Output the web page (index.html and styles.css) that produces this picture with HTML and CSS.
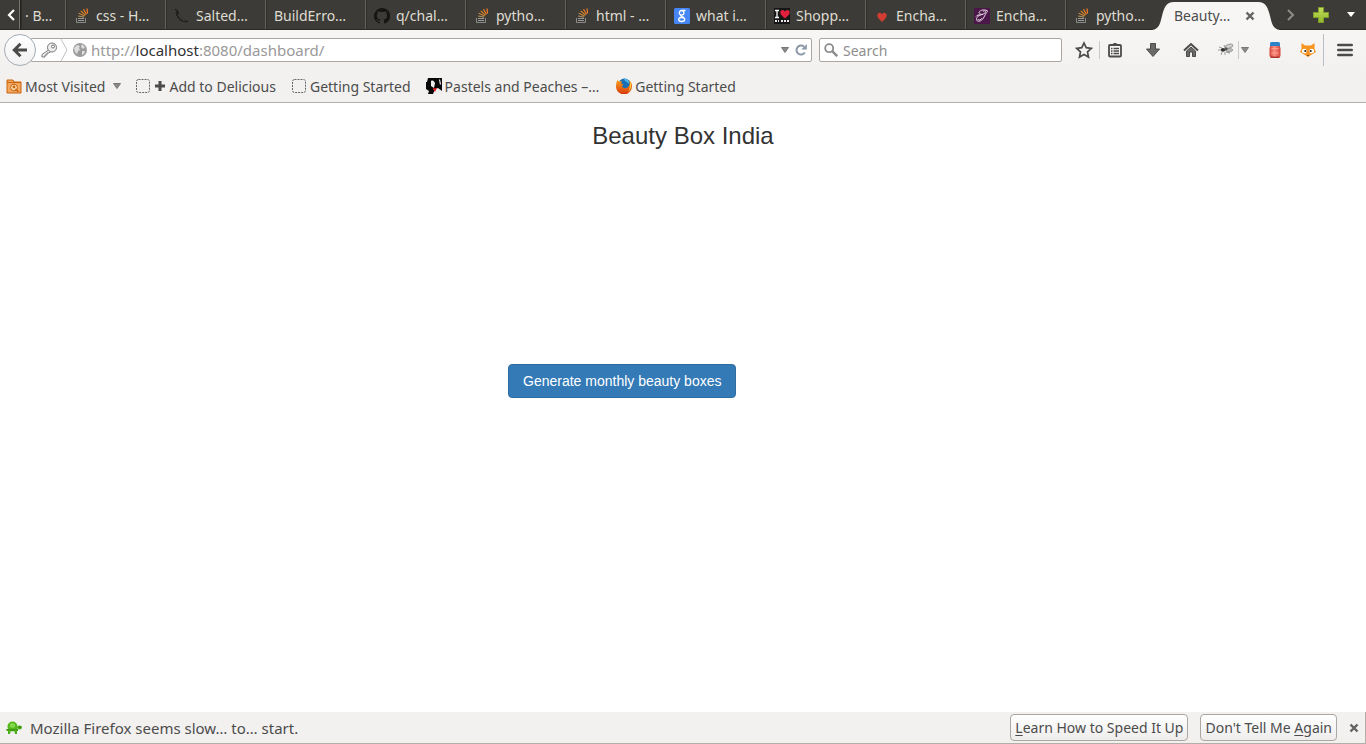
FILE: index.html
```html
<!DOCTYPE html>
<html lang="en">
<head>
<meta charset="utf-8">
<title>Beauty Box India</title>
<link rel="stylesheet" href="styles.css">
</head>
<body>
<svg class="defs" aria-hidden="true">
  <defs>
    <linearGradient id="plusFill" x1="0" y1="0" x2="0" y2="1"><stop offset="0" stop-color="#c3dd5a"/><stop offset="1" stop-color="#8fb82a"/></linearGradient>
    <linearGradient id="foxFill" x1="0" y1="0" x2="0" y2="1"><stop offset="0" stop-color="#f9a01b"/><stop offset="1" stop-color="#d9380c"/></linearGradient>
    <linearGradient id="jarFill" x1="0" y1="0" x2="1" y2="0"><stop offset="0" stop-color="#d2473a"/><stop offset=".45" stop-color="#fb8d7e"/><stop offset="1" stop-color="#d2473a"/></linearGradient>
    <symbol id="stack" viewBox="0 0 16 16">
      <path d="M2.500 10v4.500h9V10" fill="none" stroke="#8b8b89"/>
      <path d="M4 12.500h6M4 10.500h6" stroke="#9a9a98"/>
      <path d="M4 8l6.200 1.100" stroke="#a58a63" stroke-width="1.200"/>
      <path d="M4.700 5.300l6 2.700" stroke="#cf8a3c" stroke-width="1.200"/>
      <path d="M6.800 2.900l4.800 4.200" stroke="#e58a2b" stroke-width="1.200"/>
      <path d="M9.500 1.200l3.100 5M13 .500l.6 5" stroke="#f48024" stroke-width="1.200"/>
    </symbol>
    <symbol id="blank" viewBox="0 0 16 16"><rect x="1.500" y="1.500" width="13" height="13" rx="2" fill="none" stroke="#666" stroke-dasharray="2 1"/></symbol>
    <symbol id="down" viewBox="0 0 8 6"><path d="M.5.5h7L4 5.500z" fill="#8a8a88" stroke="#777"/></symbol>
    <symbol id="cross" viewBox="0 0 10 10"><path d="M1.500 1.500l7 7M8.500 1.500l-7 7" stroke="#62625f" stroke-width="2.400"/></symbol>
  </defs>
</svg>

<header class="chrome">
  <div class="tabstrip">
    <button class="scroll" aria-label="Scroll tabs left"><svg width="8" height="12" viewBox="0 0 8 12"><path d="M7 1L2 6l5 5" fill="none" stroke="#fff" stroke-width="2.200"/></svg></button>
    <nav class="tabs" aria-label="Tabs">
      <a class="tab clipped" href="#">· B…</a>
      <a class="tab" href="#"><svg class="icon"><use href="#stack"/></svg>css - H…</a>
      <a class="tab" href="#"><svg class="icon" viewBox="0 0 16 16"><path d="M1 1.500l2.500 1L4 5" fill="none" stroke="#11110f"/><path d="M2 4.500C3 4 4 4 4.500 5c.5 4 3 6.500 9.500 8.500-6 1-10-1.500-12-9z" fill="#2c2b28" stroke="#11110f" stroke-dasharray="2 1"/><path d="M4.500 6c1 3.500 3 5.500 7 7" fill="none" stroke="#55534e" stroke-width=".7"/></svg>Salted…</a>
      <a class="tab" href="#">BuildErro…</a>
      <a class="tab" href="#"><svg class="icon" viewBox="0 0 16 16"><path d="M8 0a8 8 0 0 0-2.500 15.600c.4.100.5-.2.500-.4v-1.400c-2.200.5-2.700-1-2.700-1-.4-.9-.9-1.200-.9-1.200-.7-.5.100-.5.100-.5.800.1 1.200.8 1.200.8.700 1.300 1.900.9 2.300.7.100-.5.300-.9.500-1.100C4.700 11.300 2.900 10.600 2.900 7.500c0-.9.300-1.600.8-2.100-.1-.2-.4-1 .1-2.100 0 0 .7-.2 2.200.8a7.700 7.700 0 0 1 4 0c1.500-1 2.200-.8 2.200-.8.400 1.100.2 1.900.1 2.100.5.600.8 1.300.8 2.100 0 3.100-1.900 3.800-3.700 4 .3.200.6.700.6 1.500v2.200c0 .2.100.5.600.4A8 8 0 0 0 8 0z" fill="#161514"/></svg>q/chal…</a>
      <a class="tab" href="#"><svg class="icon"><use href="#stack"/></svg>pytho…</a>
      <a class="tab" href="#"><svg class="icon"><use href="#stack"/></svg>html - …</a>
      <a class="tab" href="#"><svg class="icon" viewBox="0 0 16 16"><rect width="16" height="16" rx="1.500" fill="#4787f5"/><g fill="none" stroke="#fff" stroke-width="1.300"><ellipse cx="7.600" cy="4.800" rx="2.300" ry="2.300"/><path d="M8 2.500h3.500M7.500 7.200c-2 1 1.500 1.400 2.500 2.600"/><ellipse cx="7.700" cy="11.500" rx="3" ry="2"/></g></svg>what i…</a>
      <a class="tab" href="#"><svg class="icon" viewBox="0 0 16 16"><rect width="16" height="16" fill="#161616"/><path d="M1 2.500h4M3 2v8M1 9.500h4" stroke="#fff" stroke-width="1.300"/><path d="M11 10.500C8 8 6.300 6 6.300 4.200 6.300 1.600 10 1 11 3.500c1-2.500 4.700-1.900 4.700.7C15.700 6 14 8 11 10.500z" fill="#e0203c"/><path d="M1 13h2m1 0h1m2 0h2m1 0h2m1 0h2" stroke="#e8e8e8" stroke-width="2"/></svg>Shopp…</a>
      <a class="tab" href="#"><svg class="icon" viewBox="0 0 16 16"><path d="M8 14C5 11 3.300 9.500 3.300 7.500 3.300 4.300 7 4 8 6.400c1-2.400 4.700-2.100 4.700 1.100C12.700 9.500 11 11 8 14z" fill="#d13c33"/></svg>Encha…</a>
      <a class="tab" href="#"><svg class="icon" viewBox="0 0 16 16"><rect width="16" height="16" fill="#4b1648"/><path d="M14 3.500C12 1 6 1.500 5 4.500c0 2 4 2.500 6 .5 1.500-2 0-3-2-1.500M9 6.500C5 6.500 2.500 9 2.500 11.500c.5 3 5 2 7-1.500C11 7 12 5 13.500 3.500M2 8.500c1-1.500 3-2 4.500-1M4 11c0 2 3 1 4-1" fill="none" stroke="#e8dbe8"/></svg>Encha…</a>
      <a class="tab" href="#"><svg class="icon"><use href="#stack"/></svg>pytho…</a>
    </nav>
    <div class="active">
      <svg class="curve" viewBox="0 0 22 28" preserveAspectRatio="none"><path d="M0 28C7 27 8 22 10 14S14 0 22 0v28z"/></svg>
      <div class="active-body"><span>Beauty…</span><button class="close" aria-label="Close tab"><svg width="10" height="10"><use href="#cross"/></svg></button></div>
      <svg class="curve flip" viewBox="0 0 22 28" preserveAspectRatio="none"><path d="M0 28C7 27 8 22 10 14S14 0 22 0v28z"/></svg>
    </div>
    <div class="tab-tools">
      <button aria-label="Scroll tabs right"><svg width="8" height="12" viewBox="0 0 8 12"><path d="M1 1l5 5-5 5" fill="none" stroke="#8d8c88" stroke-width="2"/></svg></button>
      <button aria-label="New tab"><svg width="16" height="16" viewBox="0 0 16 16"><path d="M5.500.5h5v5h5v5h-5v5h-5v-5h-5v-5h5z" fill="url(#plusFill)" stroke="#7e9f2c"/></svg></button>
      <button aria-label="List all tabs"><svg width="8" height="5" viewBox="0 0 8 5"><path d="M0 0h8L4 5z" fill="#fff"/></svg></button>
    </div>
  </div>

  <div class="navbar">
    <button class="back" aria-label="Back"><svg width="16" height="16" viewBox="0 0 16 16"><path d="M15 8H3M8.500 1.800L2.300 8l6.200 6.200" fill="none" stroke="#4b4b49" stroke-width="3"/></svg></button>
    <div class="urlbar">
      <svg class="key" width="18" height="16" viewBox="0 0 18 16"><path d="M10 7L2 12.500V15h3v-2h2v-2h2l2-2" fill="#f5f5f5" stroke="#777"/><circle cx="12" cy="5.500" r="4.500" fill="#eee" stroke="#777"/><circle cx="13" cy="4.500" r="1.500" fill="#fff" stroke="#777"/></svg>
      <svg class="chevron" width="8" height="22" viewBox="0 0 8 22"><path d="M1 0l6 11-6 11" fill="none" stroke="#c2c2c2"/></svg>
      <svg class="globe" width="14" height="14" viewBox="0 0 14 14"><circle cx="7" cy="7" r="7" fill="#9c9c9c"/><path d="M1 5l3-3 3 1-1 2 1 2-2 1-1 3-2-2zM9 1l3 3-2 2-2-2zM9 8l3 0-1 3-2 1z" fill="#dedede"/></svg>
      <div class="address" role="textbox" tabindex="0" aria-label="Address">http://<b>localhost</b>:8080/dashboard/</div>
      <button aria-label="Show history"><svg width="8" height="6"><use href="#down"/></svg></button>
      <button aria-label="Reload"><svg width="12" height="12" viewBox="0 0 12 12"><path d="M9.800 8.500A4.500 4.500 0 1 1 9 2.700" fill="none" stroke="#8b98a8" stroke-width="2"/><path d="M11.800 0v5.500H6.300z" fill="#8b98a8"/></svg></button>
    </div>
    <label class="search"><svg width="14" height="14" viewBox="0 0 14 14"><circle cx="5.200" cy="5.200" r="4" fill="none" stroke="#8b8b89" stroke-width="1.800"/><path d="M8.200 8.200l5 5" stroke="#8b8b89" stroke-width="2.400"/></svg><input type="text" placeholder="Search" aria-label="Search"></label>
    <div class="tools">
      <button class="star" aria-label="Bookmark this page"><svg width="18" height="18" viewBox="0 0 18 18"><path d="M9 2l2.200 4.700 5.100.6-3.800 3.500 1 5.200L9 13.400 4.500 16l1-5.200L1.700 7.300l5.100-.6z" fill="none" stroke="#4b4b49" stroke-width="1.700"/></svg></button>
      <button class="clip" aria-label="Bookmarks"><svg width="16" height="16" viewBox="0 0 16 16"><rect x="2" y="3" width="12" height="11.500" rx="1" fill="none" stroke="#4b4b49" stroke-width="1.800"/><path d="M5 2.500L7 1h2l2 1.500V4H5z" fill="#4b4b49"/><path d="M4 6.500h1.500m1 0H12M4 9h1.500m1 0H12M4 11.500h1.500m1 0H12" stroke="#4b4b49" stroke-width="1.300"/></svg></button>
      <button class="dl" aria-label="Downloads"><svg width="16" height="16" viewBox="0 0 16 16"><path d="M5.500 1.500h5V7h4L8 14.500 1.500 7h4z" fill="#6a6a68" stroke="#4b4b49"/></svg></button>
      <button class="home" aria-label="Home"><svg width="16" height="16" viewBox="0 0 16 16"><path d="M1 8.500L8 2l7 6.500" fill="none" stroke="#4b4b49" stroke-width="2"/><path d="M3.500 9L8 5l4.500 4v5.500h-3V10h-3v4.500h-3z" fill="#6a6a68" stroke="#4b4b49"/></svg></button>
      <button class="bug" aria-label="Firebug"><svg width="16" height="14" viewBox="0 0 16 14"><path d="M4 5L1 4m2 3H0m4 2l-1 3m4-3v3m2-4l3 2m-5-6L6 2M8 9l4 1" stroke="#888" stroke-width=".8"/><ellipse cx="11" cy="3.600" rx="4.200" ry="1.900" fill="#d2d2d2" stroke="#888" stroke-width=".8" transform="rotate(-18 10 4)"/><ellipse cx="11" cy="7" rx="4" ry="1.600" fill="#bbb" stroke="#888" stroke-width=".6"/><ellipse cx="5" cy="6.800" rx="2.200" ry="1.900" fill="#333"/><circle cx="8" cy="5.800" r="1.600" fill="#555"/></svg></button>
      <button class="more" aria-label="Firebug menu"><svg width="8" height="6"><use href="#down"/></svg></button>
      <button class="jar" aria-label="Clear cache"><svg width="12" height="16" viewBox="0 0 12 16"><rect x="1" y="0" width="10" height="6" rx="1.500" fill="#2d83c9"/><path d="M1.500 4h9l1 2v8l-1.500 2H2L.5 14V6z" fill="url(#jarFill)"/><path d="M2.500 6.500h7M2.500 11h7" stroke="#fda294"/><path d="M1 14.500h10L10 16H2z" fill="#b0332a"/></svg></button>
      <button class="cat" aria-label="Scraper"><svg width="16" height="14" viewBox="0 0 16 14"><path d="M1.500 0L5 2.500h6L14.500 0v6L16 9l-5 3-3 2-3-2-5-3 1.500-3z" fill="#f6941d"/><path d="M2 7c2-2 4-1.500 5 1L5.500 10.500 2 9.500zM14 7c-2-2-4-1.500-5 1l1.500 2.500L14 9.500z" fill="#fff"/><circle cx="5.300" cy="8" r="1.100" fill="#222"/><circle cx="10.700" cy="8" r="1.100" fill="#222"/><path d="M7 12h2l-1 1.500z" fill="#333"/></svg></button>
      <button class="menu" aria-label="Open menu"><svg width="16" height="14" viewBox="0 0 16 14"><path d="M1.300 2h13.400M1.300 7h13.400M1.300 12h13.400" stroke="#4b4b49" stroke-width="2.600" stroke-linecap="round"/></svg></button>
    </div>
  </div>

  <nav class="bookmarks" aria-label="Bookmarks">
    <a class="mark visited" href="#"><svg class="icon" viewBox="0 0 16 16"><path d="M1 2h6l1 2h7v11H1z" fill="#f4a860" stroke="#c8640f"/><path d="M1 4.500h14" stroke="#c8640f"/><circle cx="8" cy="9.500" r="3.400" fill="#fbd9b0" stroke="#c8640f"/><circle cx="8" cy="9" r="1.400" fill="#c8640f"/><path d="M9.500 11l3 3" stroke="#c8640f" stroke-width="1.500"/></svg><span>Most Visited</span><svg class="caret" width="8" height="6"><use href="#down"/></svg></a>
    <a class="mark delicious" href="#"><svg class="icon"><use href="#blank"/></svg><svg class="plus" width="12" height="12" viewBox="0 0 12 12"><path d="M6 1v10M1 6h10" stroke="#4b4b49" stroke-width="3"/></svg><span>Add to Delicious</span></a>
    <a class="mark started" href="#"><svg class="icon"><use href="#blank"/></svg><span>Getting Started</span></a>
    <a class="mark pastels" href="#"><svg class="icon" viewBox="0 0 16 16"><rect width="16" height="16" fill="#080808"/><path d="M5 3c2-1 3 0 4 2l-1 5-3-2zM9 11l3-1 4 3v3H7zM0 11l3 2-1 3H0zM13 2l1-1 1 5-1 1zM0 0h2L1 4H0z" fill="#eee"/><path d="M6.500 10.500l4.500-.5-2 4z" fill="#e41c23"/></svg><span>Pastels and Peaches –…</span></a>
    <a class="mark" href="#"><svg class="icon" viewBox="0 0 16 16"><circle cx="8.500" cy="7" r="6.500" fill="#1a6fb5"/><path d="M8 1c3-1 6 2 5 5-1-2-3-2-4-3z" fill="#4fb5e8"/><path d="M1.200 2l1.500 1.500C4 3 5 3 6 3.500L5 5.500l2.500.8L6 8c1 3 5 2.500 6.500.5S14 4 13 2c4 3 3.500 8 1.500 11A8 8 0 0 1 0 8c0-2 .5-4 1.200-6z" fill="url(#foxFill)"/><path d="M14 4c2 3 1 8-2 10 2-3 2-6 2-10z" fill="#ffd23c"/></svg><span>Getting Started</span></a>
  </nav>
</header>

<main class="page">
  <h3>Beauty Box India</h3>
  <button class="primary">Generate monthly beauty boxes</button>
</main>

<footer class="notice">
  <svg width="16" height="14" viewBox="0 0 16 14"><ellipse cx="6.500" cy="5.500" rx="5" ry="5" fill="#55b81c"/><path d="M0 8h12v2H1z" fill="#3f9a12"/><ellipse cx="13.500" cy="6.500" rx="2.500" ry="2" fill="#4cae18"/><path d="M2 9h3l-1 4H2zM8 9h3v4H9z" fill="#4cae18"/><path d="M4 3l2-1 3 1v3L6 7 4 6z" fill="#82d84a"/><circle cx="14" cy="6" r=".7" fill="#1d4f08"/></svg>
  <p>Mozilla Firefox seems slow… to… start.</p>
  <button class="plain"><span><u>L</u>earn How to Speed It Up</span></button>
  <button class="plain"><span>Don't Tell Me <u>A</u>gain</span></button>
  <button class="dismiss" aria-label="Close notification"><svg width="10" height="10"><use href="#cross"/></svg></button>
</footer>
</body>
</html>
```

FILE: styles.css
```css
* { box-sizing: border-box; }
body {
  margin: 0;
  min-height: 100vh;
  display: flex;
  flex-direction: column;
  background: #fff;
  color: #4c4c4c;
  font: 14px/20px "Noto Sans", "Open Sans", sans-serif;
}
button { margin: 0; padding: 0; border: 0; background: none; font: inherit; color: inherit; display: flex; align-items: center; justify-content: center; }
a { color: inherit; text-decoration: none; }
svg { display: block; flex: none; }
.defs { position: absolute; width: 0; height: 0; }
.icon { width: 16px; height: 16px; }

.tabstrip { display: flex; height: 30px; background: #3c3b37; border-bottom: 1px solid #2b2a27; color: #dfdbd2; }
.scroll { width: 20px; padding-left: 2px; border-right: 1px solid #77756d; }
.tabs { display: flex; flex: 1; min-width: 0; overflow: hidden; }
.tab { display: flex; flex: 1 1 100px; min-width: 0; align-items: center; gap: 6px; padding: 2px 0 0 8px; border-left: 1px solid #64625a; box-shadow: inset 1px 0 #2e2d29; white-space: nowrap; overflow: hidden; }
.clipped { flex: 0 0 45px; padding-left: 4px; border-left-color: #24231f; }
.active { display: flex; flex: none; margin: 2px 0 -1px -13px; color: #4c4c4c; position: relative; }
.curve { width: 22px; height: 28px; fill: #f7f6f5; }
.flip { transform: scaleX(-1); }
.active-body { display: flex; align-items: center; justify-content: space-between; width: 84px; padding-right: 1px; background: #f7f6f5; }
.close { width: 14px; }
.tab-tools { display: flex; align-items: center; gap: 18px; padding: 0 11px 0 7px; }

.navbar { display: flex; align-items: center; height: 40px; padding: 0 13px 0 4px; background: linear-gradient(#f7f6f5, #f2f1f0); }
.back { width: 32px; height: 32px; border: 1px solid #a3acb5; border-radius: 50%; background: linear-gradient(#fff, #f1f1f1); position: relative; flex: none; }
.urlbar { display: flex; align-items: center; flex: 1; min-width: 0; height: 24px; margin-left: -5px; padding: 0 4px 0 8px; background: #fff; border: 1px solid #aaa7a2; border-radius: 0 2px 2px 0; }
.chevron { margin-left: 2px; }
.globe { margin: 0 4px 0 5px; }
.address { flex: 1; color: #999; font-size: 15px; line-height: 22px; white-space: nowrap; }
.address b { font-weight: 400; color: #333; }
.urlbar button { margin-left: 6px; }
.search { display: flex; align-items: center; gap: 5px; width: 243px; height: 24px; margin-left: 7px; padding-left: 4px; background: #fff; border: 1px solid #aaa7a2; border-radius: 2px; }
.search input { flex: 1; min-width: 0; border: 0; padding: 2px 0 0; background: none; outline: 0; font: inherit; }
.search input::placeholder { color: #8f8f8f; opacity: 1; }
.tools { display: flex; align-items: center; margin-left: 13px; }
.clip { height: 18px; margin-left: 6px; padding-left: 7px; border-left: 1px solid #c9c9c7; }
.dl, .home { margin-left: 22px; }
.bug { margin-left: 19px; }
.more { height: 18px; margin-left: 4px; padding-left: 2px; border-left: 1px solid #c9c9c7; }
.jar { margin-left: 20px; }
.cat { margin-left: 19px; }
.menu { height: 32px; margin-left: 7px; padding-left: 13px; border-left: 1px solid #b9bec4; }

.bookmarks { display: flex; align-items: center; height: 33px; padding-left: 6px; background: #f2f1f0; border-bottom: 1px solid #b3aea8; white-space: nowrap; }
.mark { display: flex; align-items: center; gap: 3px; }
.mark span { padding-top: 1px; }
.caret { margin-left: 5px; }
.visited { margin-right: 14px; }
.delicious { margin-right: 15px; }
.started { margin-right: 15px; }
.pastels { margin-right: 17px; }

.page { flex: 1; font-family: "Liberation Sans", Arial, sans-serif; }
.page h3 { margin: 20px 0 0; font-size: 24px; line-height: 26px; font-weight: 400; color: #333; text-align: center; }
.primary { height: 34px; margin: 215px 0 0 calc(50% - 175px); padding: 0 14px; background: #337ab7; border: 1px solid #2e6da4; border-radius: 4px; color: #fff; font-size: 14px; }

.notice { display: flex; align-items: center; height: 32px; padding: 0 6px; background: #f2f1f0; border: 1px solid #b3aea8; border-width: 0 1px 1px 0; }
.notice p { flex: 1; margin: 0 0 0 8px; font-size: 15px; }
.plain { height: 27px; margin-right: 12px; padding: 0 4px; background: linear-gradient(#fff, #eeedec); border: 1px solid #aba7a2; border-radius: 4px; }
.plain u { text-underline-offset: 2px; }
.dismiss { width: 10px; }
```
